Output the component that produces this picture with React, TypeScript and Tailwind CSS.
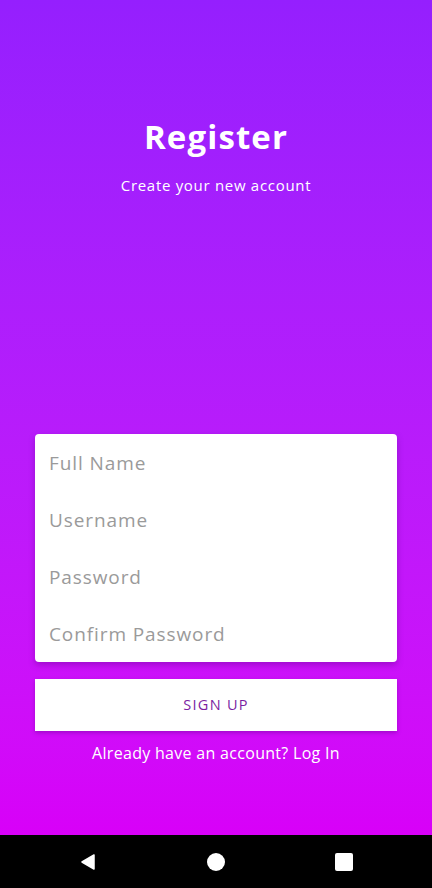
import React from "react";

export default function App() {
  const font = { fontFamily: '"Open Sans", "Noto Sans", sans-serif' };
  const fields = ["Full Name", "Username", "Password", "Confirm Password"];
  return (
    <div className="w-[432px] h-[888px] flex flex-col" style={font}>
      <div className="flex-1 flex flex-col bg-gradient-to-b from-[#951ffe] to-[#d800f8]">
        <div className="flex flex-col items-center pt-[116px]">
          <h1 className="text-[33px] leading-[42px] font-bold text-white tracking-[1.1px]">Register</h1>
          <p className="mt-[17px] text-[15px] leading-[20px] text-white tracking-[0.7px]">Create your new account</p>
        </div>
        <div className="mt-[239px] px-[35px] flex flex-col">
          <div className="bg-white rounded-[4px] shadow-[0_3px_6px_rgba(80,0,120,0.35)] flex flex-col">
            {fields.map((f) => (
              <div key={f} className="h-[57px] flex items-center pl-[14px] pt-[1px] text-[19px] tracking-[0.9px] text-[#9a9a9a]">
                {f}
              </div>
            ))}
          </div>
          <button className="mt-[17px] h-[52px] bg-white shadow-[0_2px_4px_rgba(80,0,120,0.35)] text-[14.5px] text-[#7b1fa2] tracking-[1.3px]">
            SIGN UP
          </button>
          <p className="mt-[12px] text-center text-[16px] leading-[20px] text-white tracking-[0.3px]">
            Already have an account? Log In
          </p>
        </div>
      </div>
      <div className="h-[53px] bg-black flex items-center justify-center gap-[108px]">
        <svg width="20" height="20" viewBox="0 0 20 20">
          <path d="M16 3 L16 17 L4 10 Z" fill="white" stroke="white" strokeWidth="1.5" strokeLinejoin="round" />
        </svg>
        <div className="w-[20px] h-[20px] flex items-center justify-center">
          <div className="w-[18px] h-[18px] rounded-full bg-white" />
        </div>
        <div className="w-[20px] h-[20px] flex items-center justify-center">
          <div className="w-[18px] h-[18px] rounded-[2px] bg-white" />
        </div>
      </div>
    </div>
  );
}
